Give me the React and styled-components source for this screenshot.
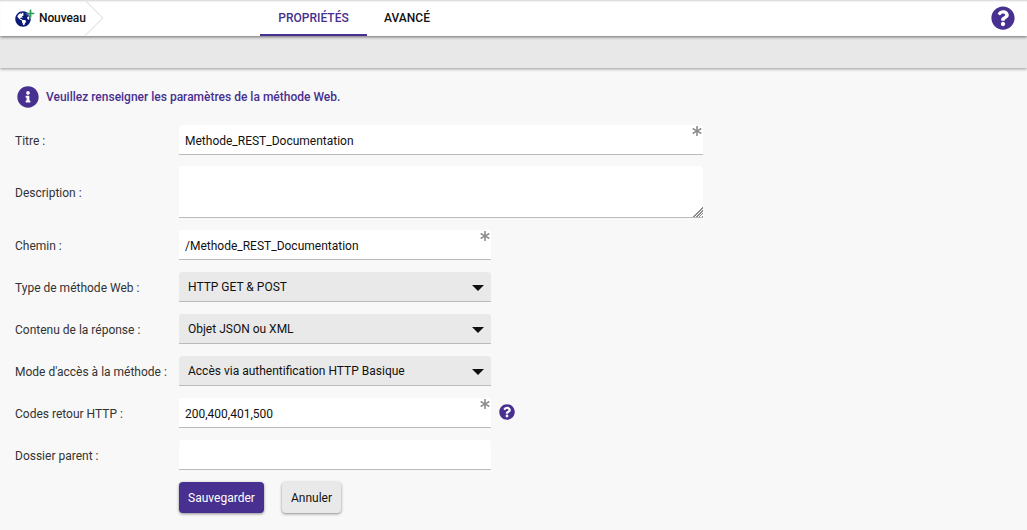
import React from 'react';
import styled, { createGlobalStyle } from 'styled-components';
import { FaGlobeAmericas, FaQuestionCircle, FaInfoCircle, FaAsterisk, FaPlus } from 'react-icons/fa';

const purple = '#47308f';

const GlobalStyle = createGlobalStyle`
  html, body {
    margin: 0;
    height: 100%;
    background: #f8f8f8;
    font-family: Roboto, "Liberation Sans", sans-serif;
    font-size: 12px;
    color: #111;
    overflow: hidden;
  }
  * { box-sizing: border-box; }
`;

const fields = [
  { label: 'Titre :', kind: 'input', value: 'Methode_REST_Documentation', wide: true, required: true },
  { label: 'Description :', kind: 'textarea', value: '', wide: true },
  { label: 'Chemin :', kind: 'input', value: '/Methode_REST_Documentation', required: true },
  { label: 'Type de méthode Web :', kind: 'select', value: 'HTTP GET & POST' },
  { label: 'Contenu de la réponse :', kind: 'select', value: 'Objet JSON ou XML' },
  { label: "Mode d'accès à la méthode :", kind: 'select', value: 'Accès via authentification HTTP Basique' },
  { label: 'Codes retour HTTP :', kind: 'input', value: '200,400,401,500', required: true, help: true },
  { label: 'Dossier parent :', kind: 'input', value: '' },
];

const App = () => {
  return (
    <>
      <GlobalStyle />
      <TopBar>
        <NewButton>
          <GlobeWrap>
            <FaGlobeAmericas size={16} color="#0c1a78" />
            <PlusBadge><FaPlus size={9} color="#2b9a58" /></PlusBadge>
          </GlobeWrap>
          Nouveau
          <Chevron />
        </NewButton>
        <Tabs>
          <Tab $active>PROPRIÉTÉS</Tab>
          <Tab>AVANCÉ</Tab>
        </Tabs>
        <HelpButton><FaQuestionCircle size={24} color={purple} /></HelpButton>
      </TopBar>
      <SubBar />
      <Content>
        <Notice>
          <FaInfoCircle size={22} color={purple} />
          Veuillez renseigner les paramètres de la méthode Web.
        </Notice>
        <Form>
          {fields.map(field => (
            <Row key={field.label} $tall={field.kind === 'textarea'}>
              <Label>{field.label}</Label>
              <Control $wide={field.wide}>
                {field.kind === 'input' && <TextInput defaultValue={field.value} />}
                {field.kind === 'textarea' && <TextArea defaultValue={field.value} />}
                {field.kind === 'select' && (
                  <>
                    <SelectBox defaultValue={field.value}>
                      <option>{field.value}</option>
                    </SelectBox>
                    <Caret />
                  </>
                )}
                {field.required && <Required><FaAsterisk size={10} /></Required>}
              </Control>
              {field.help && <FieldHelp><FaQuestionCircle size={16} color={purple} /></FieldHelp>}
            </Row>
          ))}
          <Actions>
            <PrimaryButton>Sauvegarder</PrimaryButton>
            <SecondaryButton>Annuler</SecondaryButton>
          </Actions>
        </Form>
      </Content>
    </>
  );
};

export default App;

const TopBar = styled.div`
  position: relative;
  z-index: 2;
  height: 36px;
  display: flex;
  align-items: stretch;
  background: #fff;
  box-shadow: 0 1px 3px rgba(0, 0, 0, 0.55), inset 0 2px 2px -1px rgba(0, 0, 0, 0.18);
`;

const NewButton = styled.div`
  position: relative;
  width: 104px;
  padding-left: 15px;
  display: flex;
  align-items: center;
  gap: 7px;
  overflow: hidden;
  font-weight: 500;
  letter-spacing: -0.1px;
`;

const GlobeWrap = styled.span`
  position: relative;
  display: flex;
  width: 17px;
  height: 16px;
  margin-top: 1px;
`;

const PlusBadge = styled.span`
  position: absolute;
  top: -2px;
  right: -3px;
  display: flex;
  filter: drop-shadow(0 0 1px #fff);
`;

const Chevron = styled.span`
  position: absolute;
  top: 5px;
  left: 72px;
  width: 26px;
  height: 26px;
  transform: rotate(45deg);
  border-top: 1px solid #e2e2e2;
  border-right: 1px solid #e2e2e2;
`;

const Tabs = styled.div`
  display: flex;
  margin-left: 156px;
`;

const Tab = styled.div`
  width: ${props => (props.$active ? '107px' : '80px')};
  display: flex;
  align-items: center;
  justify-content: center;
  padding-top: 1px;
  font-weight: 500;
  color: ${props => (props.$active ? purple : '#111')};
  border-bottom: 2px solid ${props => (props.$active ? purple : 'transparent')};
`;

const HelpButton = styled.div`
  margin-left: auto;
  padding-right: 12px;
  display: flex;
  align-items: center;
`;

const SubBar = styled.div`
  position: relative;
  z-index: 1;
  height: 32px;
  background: #e8e8e8;
  box-shadow: 0 1px 3px rgba(0, 0, 0, 0.4);
`;

const Content = styled.div`
  padding: 18px 15px 0;
`;

const Notice = styled.div`
  display: flex;
  align-items: center;
  gap: 7px;
  height: 22px;
  padding-left: 2px;
  color: ${purple};
  font-weight: 500;
`;

const Form = styled.div`
  margin-top: 17px;
  display: flex;
  flex-direction: column;
  gap: 12px;
`;

const Row = styled.div`
  display: flex;
  align-items: center;
  height: ${props => (props.$tall ? '52px' : '30px')};
  ${props => props.$tall && 'margin-top: -1px;'}
`;

const Label = styled.label`
  width: 164px;
  flex-shrink: 0;
  padding-top: 2px;
  color: #333;
`;

const Control = styled.div`
  position: relative;
  width: ${props => (props.$wide ? '524px' : '312px')};
  height: 100%;
`;

const fieldStyle = `
  display: block;
  width: 100%;
  height: 100%;
  margin: 0;
  border: 0;
  border-bottom: 1px solid #bbb;
  border-radius: 3px 3px 0 0;
  outline: none;
  font-family: Roboto, "Liberation Sans", sans-serif;
  font-size: 12px;
  color: #111;
`;

const TextInput = styled.input`
  ${fieldStyle}
  padding: 2px 6px 0;
  background: #fff;
`;

const TextArea = styled.textarea`
  ${fieldStyle}
  padding: 6px;
  background: #fff;
  resize: both;

  &::-webkit-resizer {
    background:
      linear-gradient(135deg, #fff 62%, transparent 62%),
      repeating-linear-gradient(135deg, #8a8a8a 0 1px, #fff 1px 2px);
  }
`;

const SelectBox = styled.select`
  ${fieldStyle}
  padding: 0 9px;
  background: #e9e9e9;
  appearance: none;
`;

const Caret = styled.span`
  position: absolute;
  top: 13px;
  right: 7px;
  border-left: 6px solid transparent;
  border-right: 6px solid transparent;
  border-top: 6px solid #111;
`;

const Required = styled.span`
  position: absolute;
  top: 1px;
  right: 1px;
  display: flex;
  color: #8c8c8c;
`;

const FieldHelp = styled.span`
  margin-left: 8px;
  margin-bottom: 2px;
  display: flex;
`;

const Actions = styled.div`
  display: flex;
  gap: 18px;
  margin-left: 164px;
`;

const BaseButton = styled.button`
  height: 31px;
  border: 0;
  border-radius: 4px;
  font-family: Roboto, "Liberation Sans", sans-serif;
  font-size: 12px;
  cursor: pointer;
  box-shadow: 0 1px 3px rgba(0, 0, 0, 0.45);
`;

const PrimaryButton = styled(BaseButton)`
  width: 85px;
  background: ${purple};
  color: #fff;
`;

const SecondaryButton = styled(BaseButton)`
  width: 59px;
  background: #e9e9e9;
  color: #111;
`;
